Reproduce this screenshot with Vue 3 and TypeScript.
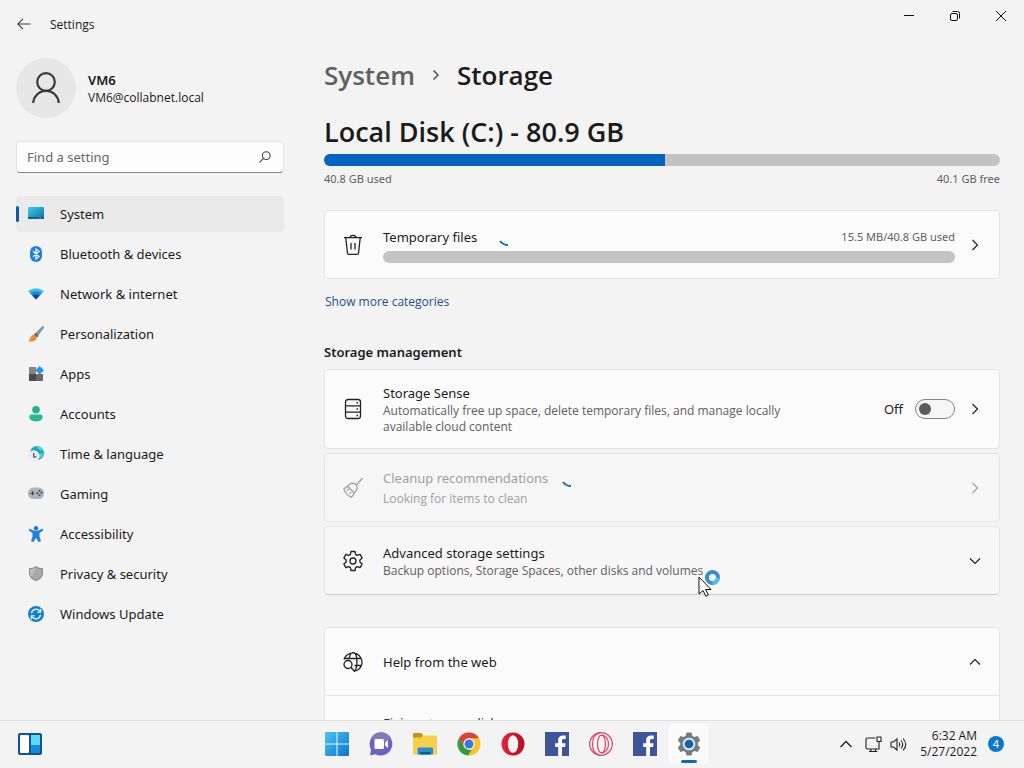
<script setup lang="ts">
import { ref } from 'vue'

interface NavItem {
  id: string
  label: string
}

const navItems: NavItem[] = [
  { id: 'system', label: 'System' },
  { id: 'bluetooth', label: 'Bluetooth & devices' },
  { id: 'network', label: 'Network & internet' },
  { id: 'personalization', label: 'Personalization' },
  { id: 'apps', label: 'Apps' },
  { id: 'accounts', label: 'Accounts' },
  { id: 'time', label: 'Time & language' },
  { id: 'gaming', label: 'Gaming' },
  { id: 'accessibility', label: 'Accessibility' },
  { id: 'privacy', label: 'Privacy & security' },
  { id: 'update', label: 'Windows Update' },
]

const pinned: { id: string; label: string }[] = [
  { id: 'start', label: 'Start' },
  { id: 'chat', label: 'Chat' },
  { id: 'explorer', label: 'File Explorer' },
  { id: 'chrome', label: 'Google Chrome' },
  { id: 'opera', label: 'Opera' },
  { id: 'facebook', label: 'Facebook' },
  { id: 'operagx', label: 'Opera GX' },
  { id: 'facebook', label: 'Facebook' },
  { id: 'settings', label: 'Settings' },
]

const active = ref('system')
const query = ref('')
const storageSense = ref(false)
const usedGb = 40.8
const totalGb = 80.9
const usedPercent = (usedGb / totalGb) * 100
</script>

<template>
  <div class="desktop">
    <div class="window">
      <header class="titlebar">
        <button class="back" aria-label="Back">
          <svg width="14" height="12" viewBox="0 0 14 12" fill="none" stroke="#444" stroke-width="1.1"><path d="M13.5 6H1M6 .8.8 6 6 11.2" /></svg>
        </button>
        <span class="app-name">Settings</span>
        <div class="window-controls">
          <button aria-label="Minimize"><svg width="12" height="12" viewBox="0 0 12 12" fill="none" stroke="#111"><path d="M1 5.5h10" /></svg></button>
          <button aria-label="Restore"><svg width="12" height="12" viewBox="0 0 12 12" fill="none" stroke="#111"><rect x="1.5" y="3.5" width="7" height="7" rx="1.5" /><path d="M3.5 1.5h5a2 2 0 0 1 2 2v5" /></svg></button>
          <button aria-label="Close"><svg width="12" height="12" viewBox="0 0 12 12" fill="none" stroke="#111"><path d="M1 1l10 10M11 1 1 11" /></svg></button>
        </div>
      </header>

      <div class="body">
        <aside class="sidebar">
          <div class="user">
            <div class="avatar">
              <svg width="28" height="32" viewBox="0 0 28 32" fill="none" stroke="#3a3a3a" stroke-width="2.2"><circle cx="14" cy="10" r="8.8" /><path d="M1.2 31c.6-7 6-12.200 12.800-12.200S26.200 24 26.800 31" /></svg>
            </div>
            <div>
              <div class="user-name">VM6</div>
              <div class="user-mail">VM6@collabnet.local</div>
            </div>
          </div>

          <div class="search">
            <input v-model="query" type="text" placeholder="Find a setting" aria-label="Find a setting" />
            <svg width="12" height="12" viewBox="0 0 12 12" fill="none" stroke="#444" stroke-width="1.100"><circle cx="7.300" cy="4.600" r="3.900" /><path d="M4.500 7.400.6 11.400" /></svg>
          </div>

          <nav class="nav">
            <button v-for="item in navItems" :key="item.id" :class="['nav-item', { active: active === item.id }]" @click="active = item.id">
              <svg width="16" height="16" viewBox="0 0 16 16">
                <template v-if="item.id === 'system'">
                  <defs><linearGradient id="sysg" x1="0" y1="0" x2="1" y2="1"><stop offset="0" stop-color="#3fd0e8" /><stop offset="1" stop-color="#0b6ea8" /></linearGradient></defs>
                  <rect y="1" width="16" height="12" rx="1" fill="url(#sysg)" /><path d="M0 11h16v1a1 1 0 0 1-1 1H1a1 1 0 0 1-1-1z" fill="#11608f" /><path d="M10 12h1M12 12h1" stroke="#7fd6ef" stroke-width=".8" />
                </template>
                <template v-else-if="item.id === 'bluetooth'">
                  <rect x="2" width="12" height="16" rx="6" fill="#1a7fe8" /><path d="M5 5.200l6 5.300L8 13V3l3 2.500L5 10.800" fill="none" stroke="#fff" stroke-width="1.200" />
                </template>
                <template v-else-if="item.id === 'network'">
                  <path d="M0 5Q8-.5 16 5L8 13.500z" fill="#3cc0e6" /><path d="M2.200 7.300Q8 3 13.800 7.300L8 13.500z" fill="#1c87d8" /><path d="M4.500 9.800Q8 7 11.500 9.800L8 13.500z" fill="#10489c" />
                </template>
                <template v-else-if="item.id === 'personalization'">
                  <path d="M15.600.4c.6.600.4 1.200 0 1.900L9 11.200 6 8.400 13.700.7c.7-.6 1.400-.8 1.900-.3z" fill="#8796a2" /><path d="M7.500 7l3 2.800L9 11.500 5.800 8.600z" fill="#5c6670" /><path d="M5.700 8.700l3.200 2.900c-.3 3.600-4.500 4.600-8.700 3.600C2.800 13.700 1.800 9.200 5.700 8.700z" fill="#ee8a33" />
                </template>
                <template v-else-if="item.id === 'apps'">
                  <rect x="1" y="1" width="7" height="7" fill="#858585" /><rect x="1" y="8" width="7" height="7" fill="#4b4b4b" /><rect x="8" y="8" width="7" height="7" fill="#686868" /><path d="M11.700 0 16 4.300l-4.300 4.300-4.300-4.300z" fill="#2496e8" />
                </template>
                <template v-else-if="item.id === 'accounts'">
                  <circle cx="8" cy="3.800" r="3.800" fill="#23b08a" /><path d="M3.500 8.500h9a2.300 2.300 0 0 1 2.300 2.300c0 3-3 4.700-6.800 4.700s-6.800-1.700-6.800-4.700a2.300 2.300 0 0 1 2.300-2.300z" fill="#28b893" />
                </template>
                <template v-else-if="item.id === 'time'">
                  <circle cx="9" cy="7" r="7" fill="#1ba8bf" /><path d="M8 1c3-2 7 1 7.500 4L12 4zM11 8l4-1-1 4-3 1z" fill="#5bd0dd" /><circle cx="5.800" cy="10" r="5.700" fill="#ececf0" /><path d="M5.800 7v4h2.700" fill="none" stroke="#333" stroke-width="1.100" />
                </template>
                <template v-else-if="item.id === 'gaming'">
                  <rect y="1.500" width="16" height="11.500" rx="5.500" fill="#aeb4bb" /><path d="M2.500 7.200h4M4.500 5.200v4" stroke="#333b43" stroke-width="1.100" /><g fill="#454d56"><circle cx="11.500" cy="4.700" r="1" /><circle cx="9.500" cy="7.200" r="1" /><circle cx="13.500" cy="6.700" r="1" /><circle cx="11.500" cy="9.200" r="1" /></g>
                </template>
                <template v-else-if="item.id === 'accessibility'">
                  <circle cx="8" cy="2.200" r="2.200" fill="#1b78d0" /><path d="M1.800 2.500C4 4 5.800 4.800 8 4.800s4-.8 6.200-2.300l1 1.900L11.500 7v3.500l1.500 4.700-2.500.8L8 11.800 5.500 16 3 15.200l1.500-4.700V7L.8 4.400z" fill="#1e82dc" />
                </template>
                <template v-else-if="item.id === 'privacy'">
                  <path d="M8 0c2 1.500 4.500 2.200 7 2.200v4.800c0 4-3 6.500-7 8.200-4-1.700-7-4.200-7-8.200V2.200C3.500 2.200 6 1.500 8 0z" fill="#85898d" /><path d="M8 1.200c1.700 1.200 3.900 1.900 6 2v3.800c0 3.300-2.500 5.500-6 7-3.500-1.500-6-3.700-6-7V3.200c2.100-.1 4.300-.8 6-2z" fill="#a6aaad" /><path d="M8 1.200c-1.700 1.200-3.900 1.900-6 2v3.800c0 1.600.6 3 1.600 4z" fill="#bdc0c3" />
                </template>
                <template v-else>
                  <circle cx="8" cy="8" r="8" fill="#1580cf" /><path d="M3.500 7.200A4.700 4.700 0 0 1 11.800 5M12.500 8.800A4.700 4.700 0 0 1 4.200 11" fill="none" stroke="#e8f7ff" stroke-width="1.300" /><path d="M12.700 2.800v3.400H9.300M3.300 13.200V9.800h3.400" fill="none" stroke="#e8f7ff" stroke-width="1.200" />
                </template>
              </svg>
              <span>{{ item.label }}</span>
            </button>
          </nav>
        </aside>

        <main class="content">
          <h1 class="breadcrumb">
            <a href="#system">System</a>
            <svg width="8" height="12" viewBox="0 0 8 12" fill="none" stroke="#555" stroke-width="1.500"><path d="M1.500 1.500 6 6l-4.500 4.500" /></svg>
            <span>Storage</span>
          </h1>

          <section class="disk">
            <h2>Local Disk (C:) - 80.9 GB</h2>
            <div class="bar" role="progressbar" aria-label="Disk space used" :aria-valuenow="Math.round(usedPercent)">
              <div class="bar-fill" :style="{ width: usedPercent + '%' }"></div>
            </div>
            <div class="disk-labels"><span>40.8 GB used</span><span>40.1 GB free</span></div>
          </section>

          <section class="card temp">
            <svg class="card-icon" width="20" height="22" viewBox="0 0 20 22" fill="none" stroke="#222" stroke-width="1.300"><path d="M1 3.700h18M7 3.500C7 .6 13 .6 13 3.500M2.800 3.700l1.600 15c.1 1 .7 1.600 1.700 1.600h7.800c1 0 1.600-.6 1.700-1.600l1.600-15M8 9v6.500M12 9v6.500" /></svg>
            <div class="temp-main">
              <div class="temp-head">
                <span class="title">Temporary files</span>
                <svg class="spinner" width="20" height="20" viewBox="0 0 20 20" fill="none" stroke="#176fa8" stroke-width="2"><path d="M3 14q3 4 8 4" /></svg>
                <span class="temp-used">15.5 MB/40.8 GB used</span>
              </div>
              <div class="bar" role="progressbar" aria-label="Temporary files" aria-valuenow="0"></div>
            </div>
            <svg class="chev" width="12" height="12" viewBox="0 0 12 12" fill="none" stroke="#222" stroke-width="1.200"><path d="M3.500 1 8.500 6l-5 5" /></svg>
          </section>

          <a class="more" href="#categories">Show more categories</a>

          <h3>Storage management</h3>
          <div class="cards">
            <section class="card sense">
              <svg class="card-icon" width="20" height="22" viewBox="0 0 20 22" fill="none" stroke="#222" stroke-width="1.300"><rect x="2.500" y="1.500" width="15" height="19" rx="2.500" /><path d="M2.500 7.800h15M2.500 14.200h15" /><path d="M13.500 4.700H15M13.500 11H15M13.500 17.400H15" stroke-width="1.500" /></svg>
              <div class="card-text">
                <div class="title">Storage Sense</div>
                <div class="sub">Automatically free up space, delete temporary files, and manage locally available cloud content</div>
              </div>
              <label class="toggle"><span>Off</span><input v-model="storageSense" type="checkbox" role="switch" aria-label="Storage Sense" /></label>
              <svg class="chev" width="12" height="12" viewBox="0 0 12 12" fill="none" stroke="#222" stroke-width="1.200"><path d="M3.500 1 8.500 6l-5 5" /></svg>
            </section>

            <section class="card disabled">
              <svg class="card-icon" width="20" height="22" viewBox="0 0 20 22" fill="none" stroke="#a0a0a0" stroke-width="1.300"><path d="M19.500 1.300 13 8.200M6.500 7.500c1.500-1.700 4.500-1.700 6.200 0s2 4 .6 5.900L8.600 20.300C5.500 19 2 15.500.8 11.900zM4.600 9.200l7 7M3.800 13.500l2-1.500M6.600 16.600l1.600-1.600" /></svg>
              <div class="card-text spaced">
                <div class="title-row">
                  <span class="title">Cleanup recommendations</span>
                  <svg class="spinner" width="20" height="20" viewBox="0 0 20 20" fill="none" stroke="#1a6fa8" stroke-width="2"><path d="M3 14q3 4 8 4" /></svg>
                </div>
                <div class="sub">Looking for items to clean</div>
              </div>
              <svg class="chev" width="12" height="12" viewBox="0 0 12 12" fill="none" stroke="#a0a0a0" stroke-width="1.200"><path d="M3.500 1 8.500 6l-5 5" /></svg>
            </section>

            <section class="card hovered">
              <svg class="card-icon" width="20" height="22" viewBox="0 0 20 22" fill="none" stroke="#222" stroke-width="1.300" stroke-linejoin="round"><path d="M8 1.500h4l.6 2.900 1.700 1 2.800-1 2 3.500-2.200 2v2.200l2.200 2-2 3.500-2.800-1-1.700 1-.6 2.900H8l-.6-2.900-1.700-1-2.800 1-2-3.500 2.200-2V9.900l-2.200-2 2-3.500 2.800 1 1.700-1z" /><circle cx="10" cy="11" r="3" /></svg>
              <div class="card-text">
                <div class="title">Advanced storage settings</div>
                <div class="sub">Backup options, Storage Spaces, other disks and volumes</div>
              </div>
              <svg class="chev" width="12" height="12" viewBox="0 0 12 12" fill="none" stroke="#222" stroke-width="1.200"><path d="M1 3.500l5 5 5-5" /></svg>
            </section>
          </div>

          <section class="help">
            <div class="help-head">
              <svg class="card-icon" width="20" height="22" viewBox="0 0 20 22" fill="none" stroke="#222" stroke-width="1.300"><path d="M1 8.500A9.200 9.200 0 1 1 12.500 20M1.500 7.500h17M11.500 14.500h7M6 7.500C7 3.500 8.500 1.700 10 1.700c2.500 0 4 4 4 9.300s-1.500 9-3 9" /><circle cx="5" cy="13.500" r="4" /><path d="M7.800 16.500l4.200 4.300" /></svg>
              <span class="title">Help from the web</span>
              <svg class="chev" width="12" height="12" viewBox="0 0 12 12" fill="none" stroke="#222" stroke-width="1.200"><path d="M1 8.500l5-5 5 5" /></svg>
            </div>
            <div class="help-body"><a href="#help">Fixing storage disk</a></div>
          </section>
        </main>
      </div>
    </div>

    <footer class="taskbar">
      <button class="widgets" aria-label="Widgets">
        <svg width="24" height="24" viewBox="0 0 24 24"><rect y="1" width="24" height="22" rx="2" fill="#0e5596" /><rect x="2" y="3" width="9" height="18" rx="1" fill="#fff" /><rect x="13" y="3" width="9" height="10" fill="#5fd8fa" /><rect x="13" y="13" width="9" height="8" fill="#1689da" /></svg>
      </button>
      <div class="pinned">
        <button v-for="(app, i) in pinned" :key="i" :class="['pin', { running: app.id === 'settings' }]" :aria-label="app.label">
          <svg width="24" height="24" viewBox="0 0 24 24">
            <template v-if="app.id === 'start'">
              <defs><linearGradient id="win" x1="0" y1="0" x2="1" y2="1"><stop offset="0" stop-color="#4cc4f2" /><stop offset="1" stop-color="#0c74cf" /></linearGradient></defs>
              <rect width="24" height="24" rx="1" fill="url(#win)" /><path d="M12 0v24M0 12h24" stroke="#f3f3f3" />
            </template>
            <template v-else-if="app.id === 'chat'">
              <path d="M12 .5A11.500 11.500 0 1 1 6.500 22.200L1 23.500 2 17.500A11.500 11.500 0 0 1 12 .5z" fill="#6a63c4" /><path d="M2 6A11.500 11.500 0 0 1 22 6L12 12z" fill="#8579b8" /><rect x="5.500" y="7" width="9.500" height="10" rx="1.500" fill="#fff" /><path d="M16 10.500l3-2.500v8l-3-2.500z" fill="#fff" />
            </template>
            <template v-else-if="app.id === 'explorer'">
              <path d="M0 2.500C0 1.500.5 1 1.500 1H8l2 2.500h12.500c1 0 1.500.5 1.500 1.500v17.500H0z" fill="#f9cf4a" /><path d="M0 2.500C0 1.500.5 1 1.500 1H8l2 2L8.500 5.500H0z" fill="#c09320" /><path d="M4.500 22.500V17c0-1 .5-1.500 1.500-1.500h12.500c1 0 1.500.5 1.500 1.500v5.500z" fill="#1f8fd2" /><path d="M7 20h10.500v2.500H7z" fill="#0f5d9c" />
            </template>
            <template v-else-if="app.id === 'chrome'">
              <circle cx="12" cy="12" r="11.500" fill="#f5c52d" /><path d="M2 6.300A11.500 11.500 0 0 1 22 6.300H12L7 14.800z" fill="#d8423a" /><path d="M2 6.300l5 8.500 5 2.900 2.500.2L11 23.500A11.500 11.500 0 0 1 2 6.300z" fill="#2f9a4b" /><circle cx="12" cy="12" r="5.700" fill="#fff" /><circle cx="12" cy="12" r="4.500" fill="#3c78e0" />
            </template>
            <template v-else-if="app.id === 'opera'">
              <defs><linearGradient id="op" x1="0" y1="0" x2="1" y2="0"><stop offset="0" stop-color="#e8203a" /><stop offset="1" stop-color="#b01226" /></linearGradient></defs>
              <circle cx="12" cy="12" r="11.500" fill="url(#op)" /><ellipse cx="12" cy="12" rx="5.200" ry="8.700" fill="#f8f4f4" />
            </template>
            <template v-else-if="app.id === 'facebook'">
              <rect width="24" height="24" fill="#40549a" /><path d="M13.200 24v-9h-3v-3.700h3V8.500c0-3.600 2.200-5 5-5 1.200 0 2.200.1 2.500.2v3.400h-1.800c-1.500 0-1.900.8-1.900 1.900v2.300h3.600l-.5 3.700H17v9z" fill="#fff" />
            </template>
            <template v-else-if="app.id === 'operagx'">
              <g fill="none" stroke="#dc4468" stroke-width="1.200"><circle cx="12" cy="12" r="11.300" /><ellipse cx="12.500" cy="12" rx="4" ry="8.800" /><path d="M10.500.8C5 2 3.500 7 3.500 12S5 22 10.500 23.200M12.500 3.200c4.500 0 7 4 7 8.800s-2.500 8.800-7 8.800" /></g>
            </template>
            <template v-else>
              <path d="M9.500.5h5l.8 3.300 2 1.200 3.300-1L23.200 8.500 20.800 11v2l2.400 2.500-2.600 4.500-3.300-1-2 1.200-.8 3.300h-5l-.8-3.300-2-1.200-3.300 1L.8 15.500 3.200 13v-2L.8 8.500 3.400 4l3.300 1 2-1.200z" fill="#777b80" /><circle cx="12" cy="12" r="6.300" fill="#d5e8f5" /><circle cx="12" cy="12" r="4.300" fill="#1461a8" />
            </template>
          </svg>
        </button>
      </div>
      <div class="tray">
        <button aria-label="Show hidden icons"><svg width="14" height="14" viewBox="0 0 14 14" fill="none" stroke="#222" stroke-width="1.300"><path d="M1.500 10 7 4.500l5.500 5.500" /></svg></button>
        <button class="status" aria-label="Network and volume">
          <svg width="17" height="17" viewBox="0 0 17 17" fill="none" stroke="#222" stroke-width="1.100"><path d="M10.500 2H2.500A1.500 1.500 0 0 0 1 3.500v8A1.500 1.500 0 0 0 2.500 13H14V6M6 13v2.500M10.500 13v2.500M4 15.500h8.500M12 1h4v4.500h-4z" /></svg>
          <svg width="17" height="17" viewBox="0 0 17 17" fill="none" stroke="#222" stroke-width="1.100"><path d="M1 6h2.500L7 3v11l-3.500-3H1zM9 6.500q1.500 2 0 4M11 4.500q3.500 4 0 8M13 2.500q5.500 6 0 12" /></svg>
        </button>
        <div class="clock"><div>6:32 AM</div><div>5/27/2022</div></div>
        <button class="badge" aria-label="4 notifications">4</button>
      </div>
    </footer>

    <svg class="pointer" width="26" height="30" viewBox="0 0 26 30" aria-hidden="true">
      <circle cx="14.500" cy="8.500" r="5.500" fill="#fff" stroke="#3b8ad8" stroke-width="4" /><path d="M14.500 14A5.500 5.500 0 0 0 20 8.500" fill="none" stroke="#4cbdec" stroke-width="4" />
      <path d="M1 8v17l4-3.500 2.800 5.700 2.500-1.200-2.700-5.500H13z" fill="#fff" stroke="#111" />
    </svg>
  </div>
</template>

<style>
html,
body {
  margin: 0;
  overflow: hidden;
}
</style>

<style scoped>
.desktop {
  height: 100vh;
  display: grid;
  grid-template-rows: minmax(0, 1fr) 48px;
  background: #f3f3f3;
  color: #1b1b1b;
  font: 13px/20px "Noto Sans", "Open Sans", sans-serif;
  overflow: hidden;
}
button {
  font: inherit;
  color: inherit;
  border: 0;
  padding: 0;
  background: none;
}
a {
  color: #1d4f8c;
  text-decoration: none;
}
svg {
  flex: none;
  display: block;
}
.window {
  display: flex;
  flex-direction: column;
  min-height: 0;
  overflow: hidden;
}
.titlebar {
  display: flex;
  height: 48px;
  flex: none;
}
.back {
  width: 48px;
  display: grid;
  place-items: center;
}
.app-name,
.user-mail,
.more,
.sub,
.clock {
  font-family: "Open Sans", "Noto Sans", sans-serif;
  font-size: 12px;
  line-height: 16px;
}
.app-name {
  line-height: 50px;
  padding-left: 2px;
}
.window-controls {
  margin-left: auto;
  display: flex;
  height: 32px;
}
.window-controls button {
  width: 46px;
  display: grid;
  place-items: center;
}
.body {
  display: grid;
  grid-template-columns: 300px minmax(0, 1fr);
}
.sidebar {
  padding: 10px 16px 0;
}
.user {
  display: flex;
  align-items: center;
  gap: 12px;
  height: 60px;
}
.avatar {
  width: 60px;
  height: 60px;
  border-radius: 50%;
  background: #e7e7e7;
  display: grid;
  place-items: center;
}
.user-name {
  font-weight: 600;
  line-height: 20px;
}
.search {
  display: flex;
  align-items: center;
  height: 32px;
  box-sizing: border-box;
  margin: 23px 0;
  padding: 0 12px 0 10px;
  background: #fdfdfd;
  border: 1px solid #e2e2e2;
  border-bottom-color: #868686;
  border-radius: 4px;
}
.search input {
  flex: 1;
  min-width: 0;
  border: 0;
  padding: 0;
  outline: 0;
  background: none;
  font: inherit;
}
.search input::placeholder {
  color: #686868;
  opacity: 1;
}
.nav {
  display: flex;
  flex-direction: column;
  gap: 4px;
}
.nav-item {
  position: relative;
  display: flex;
  align-items: center;
  gap: 16px;
  height: 36px;
  padding: 0 12px;
  border-radius: 4px;
  text-align: left;
}
.nav-item.active {
  background: #eaeaea;
}
.nav-item.active::before {
  content: "";
  position: absolute;
  left: 0;
  top: 10px;
  width: 3px;
  height: 16px;
  border-radius: 2px;
  background: #0a5ab0;
}
.content {
  padding: 8px 24px 0;
}
h1,
h2,
h3 {
  margin: 0;
  font-weight: 600;
}
.breadcrumb,
.disk h2 {
  font-family: "Open Sans", "Noto Sans", sans-serif;
}
.breadcrumb {
  display: flex;
  align-items: center;
  gap: 17px;
  font-size: 26px;
  line-height: 38px;
}
.breadcrumb a {
  color: #606060;
}
.disk h2 {
  font-size: 27px;
  line-height: 36px;
  margin: 20px 0 4px;
}
.bar {
  height: 12px;
  border-radius: 6px;
  background: #c3c3c3;
  overflow: hidden;
}
.bar-fill {
  height: 100%;
  background: #0563c1;
}
.disk-labels,
.temp-used {
  font-size: 11px;
  line-height: 16px;
  color: #606060;
}
.disk-labels {
  display: flex;
  justify-content: space-between;
  margin-top: 5px;
}
.card,
.help {
  background: #fbfbfb;
  border: 1px solid #e4e4e4;
  border-radius: 4px;
  box-sizing: border-box;
}
.card,
.help-head {
  display: flex;
  align-items: center;
  min-height: 69px;
  padding: 0 18px;
}
.card-icon {
  margin-right: 20px;
}
.title {
  line-height: 20px;
}
.sub {
  color: #606060;
}
.temp {
  margin-top: 23px;
}
.temp-main {
  flex: 1;
}
.temp-head {
  display: flex;
  align-items: center;
}
.temp-head .spinner {
  margin-left: 20px;
}
.temp-used {
  margin-left: auto;
}
.temp-main .bar {
  margin-top: 4px;
}
.chev {
  margin-left: auto;
}
.temp .chev {
  margin-left: 14px;
}
.more {
  display: block;
  width: max-content;
  margin: 15px 0 0 1px;
}
h3 {
  font-size: 13px;
  line-height: 20px;
  margin: 32px 0 7px;
}
.cards {
  display: grid;
  gap: 4px;
}
.sense {
  min-height: 80px;
}
.sense .card-text {
  max-width: 420px;
}
.spaced .sub {
  margin-top: 3px;
}
.title-row {
  display: flex;
  gap: 12px;
}
.disabled {
  background: #f6f6f6;
}
.disabled .title,
.disabled .sub {
  color: #a0a0a0;
}
.hovered {
  background: #f7f7f7;
  border-bottom-color: #cdcdcd;
}
.toggle {
  display: flex;
  align-items: center;
  gap: 12px;
  margin-left: auto;
}
.toggle input {
  appearance: none;
  box-sizing: border-box;
  width: 40px;
  height: 20px;
  margin: 0;
  padding: 3px;
  border: 1px solid #858585;
  border-radius: 10px;
  background: #f6f6f6;
}
.toggle input::before {
  content: "";
  display: block;
  width: 12px;
  height: 12px;
  border-radius: 50%;
  background: #5c5c5c;
}
.toggle + .chev {
  margin-left: 14px;
}
.help {
  margin-top: 32px;
}
.help-head {
  min-height: 67px;
  border-bottom: 1px solid #e4e4e4;
}
.help-body {
  padding: 17px 58px;
}
.help-body a {
  color: #173f78;
}
.taskbar {
  position: relative;
  display: grid;
  grid-template-columns: 1fr auto 1fr;
  align-items: center;
  padding-left: 2px;
  background: #f3f3f3;
  box-shadow: inset 0 1px #dfdfdf;
}
.widgets {
  justify-self: start;
  margin-left: 16px;
}
.pinned {
  display: flex;
}
.pin {
  position: relative;
  width: 40px;
  height: 40px;
  margin: 0 2px;
  display: grid;
  place-items: center;
  border-radius: 4px;
}
.pin.running {
  background: #fafafa;
}
.pin.running::after {
  content: "";
  position: absolute;
  left: 12px;
  bottom: 1px;
  width: 16px;
  height: 3px;
  border-radius: 2px;
  background: #0b6bb5;
}
.tray {
  justify-self: end;
  display: flex;
  align-items: center;
  margin-right: 20px;
}
.status {
  display: flex;
  gap: 8px;
  margin: 0 13px 0 12px;
}
.clock {
  text-align: right;
}
.badge {
  width: 16px;
  height: 16px;
  margin-left: 11px;
  border-radius: 50%;
  background: #0b78d0;
  color: #fff;
  font-size: 11px;
  line-height: 16px;
}
.pointer {
  position: absolute;
  left: 698px;
  top: 569px;
}
</style>
